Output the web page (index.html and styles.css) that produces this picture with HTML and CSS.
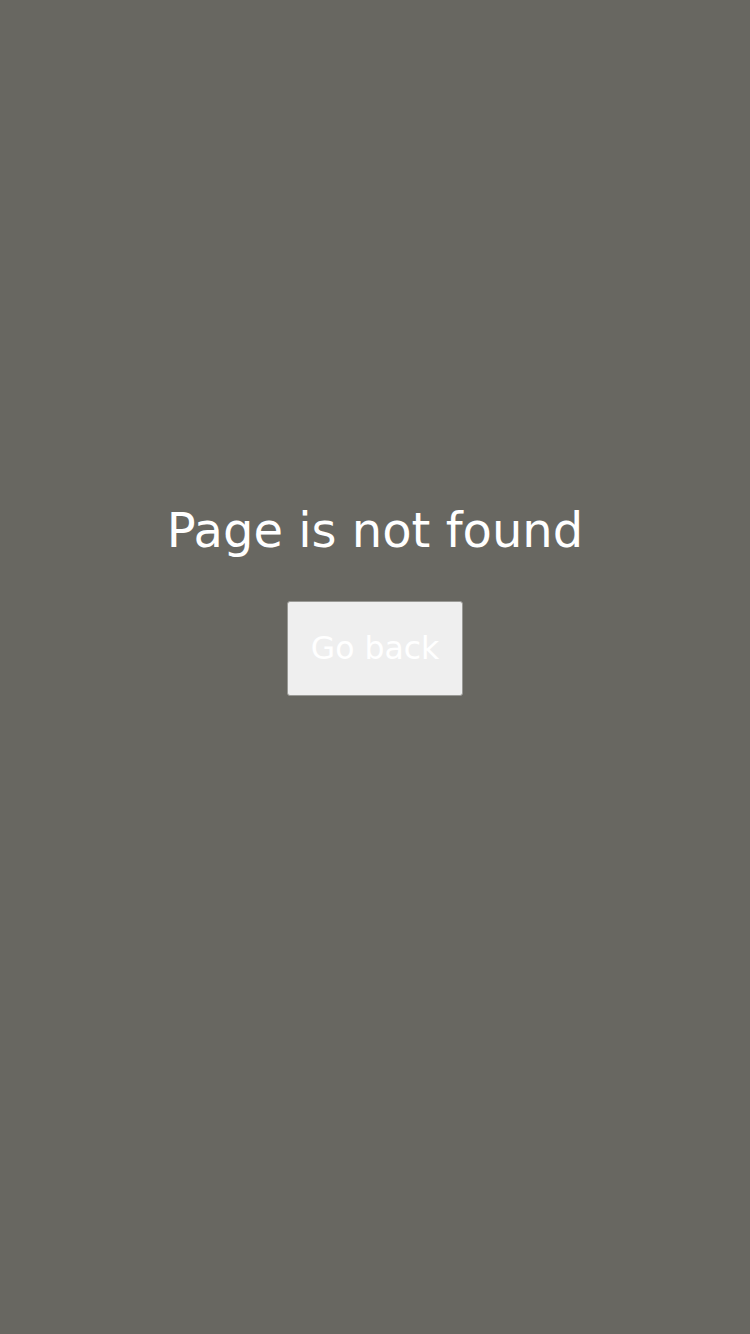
FILE: index.html
```html
<!DOCTYPE html>
<html>
<head>
<meta charset="utf-8">
<link rel="stylesheet" href="styles.css">
</head>
<body>
<main class="page">
  <h1 class="title">Page is not found</h1>
  <button class="back">Go back</button>
</main>
</body>
</html>
```
FILE: styles.css
```css
html, body {
  margin: 0;
  padding: 0;
  height: 100%;
}
body {
  background: #686761;
  font-family: "DejaVu Sans", Verdana, sans-serif;
}
.page {
  box-sizing: border-box;
  height: 100%;
  padding-top: 502px;
  display: flex;
  flex-direction: column;
  align-items: center;
}
.title {
  margin: 0 0 41px;
  font-size: 48px;
  font-weight: normal;
  color: #ffffff;
  line-height: 1.2;
}
.back {
  font-family: "DejaVu Sans", Verdana, sans-serif;
  font-size: 31.5px;
  color: #ffffff;
  background: #efefef;
  border: 1px solid #9a9a96;
  border-radius: 3px;
  padding: 29px 23px;
  line-height: 35px;
}
```
